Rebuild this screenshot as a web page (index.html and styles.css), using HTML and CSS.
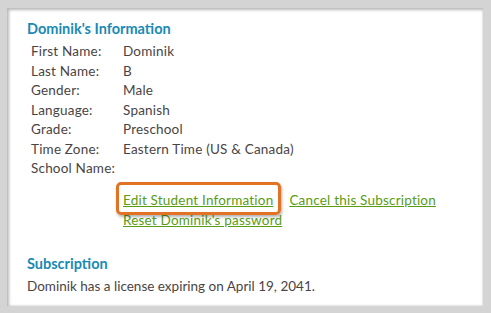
FILE: index.html
```html
<!DOCTYPE html>
<html lang="en">
<head>
    <meta charset="UTF-8">
    <title>Student Information</title>
    <link rel="stylesheet" href="styles.css">
</head>
<body>
    <div class="panel">
        <h2 class="section-title">Dominik's Information</h2>
        <table class="info">
            <tr><td class="label">First Name:</td><td>Dominik</td></tr>
            <tr><td class="label">Last Name:</td><td>B</td></tr>
            <tr><td class="label">Gender:</td><td>Male</td></tr>
            <tr><td class="label">Language:</td><td>Spanish</td></tr>
            <tr><td class="label">Grade:</td><td>Preschool</td></tr>
            <tr><td class="label">Time Zone:</td><td>Eastern Time (US &amp; Canada)</td></tr>
            <tr><td class="label">School Name:</td><td></td></tr>
        </table>

        <div class="actions">
            <div class="action-row">
                <a href="#" class="highlight">Edit Student Information</a>
                <a href="#">Cancel this Subscription</a>
            </div>
            <div class="action-row">
                <a href="#">Reset Dominik's password</a>
            </div>
        </div>

        <h2 class="section-title sub">Subscription</h2>
        <p class="note">Dominik has a license expiring on April 19, 2041.</p>
    </div>
</body>
</html>
```

FILE: styles.css
```css
body {
    margin: 0;
    height: 313px;
    background: #d4d4d4;
    font-family: Lato, 'Open Sans', sans-serif;
    font-size: 13.5px;
    color: #4a4444;
    box-sizing: border-box;
    padding: 8px 8px 7px 7px;
}

.panel {
    height: 100%;
    background: #fff;
    box-shadow: inset 2px 2px 3px #b8b8b8, inset -1px -1px 2px #e4e4e4;
    padding: 12px 20px 0 20px;
    box-sizing: border-box;
}

.section-title {
    margin: 0;
    font-size: 14.5px;
    font-weight: bold;
    color: #1a8ab4;
    line-height: 18px;
}

.info {
    border-collapse: collapse;
    margin: 4px 0 0 4px;
    letter-spacing: 0.2px;
}

.info td {
    padding: 0;
    height: 19.5px;
    line-height: 19.5px;
}

.info .label {
    width: 92px;
}

.actions {
    margin: 11px 0 0 96px;
    letter-spacing: 0.2px;
}

.action-row {
    display: flex;
    gap: 16px;
    line-height: 20px;
}

.actions a {
    color: #5a9c14;
    text-decoration: underline;
}

.highlight {
    position: relative;
}

.highlight::before {
    content: "";
    position: absolute;
    left: -7px;
    right: -8px;
    top: -8px;
    bottom: -5px;
    border: 3px solid #e27224;
    border-radius: 5px;
    box-shadow: 1px 2px 3px rgba(0,0,0,0.3);
}

.sub {
    margin-top: 25px;
}

.note {
    margin: 4px 0 0;
    line-height: 18px;
}
```
